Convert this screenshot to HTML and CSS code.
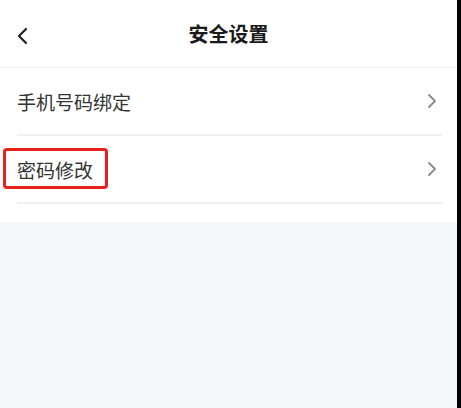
FILE: index.html
```html
<!DOCTYPE html>
<html lang="zh-CN">
<head>
  <meta charset="UTF-8" />
  <meta name="viewport" content="width=device-width, initial-scale=1.0"/>
  <title>安全设置</title>
  <link rel="stylesheet" href="styles.css">
</head>
<body>
  <div class="page">
    <div class="header">
      <span class="back">
        <svg width="12" height="18" viewBox="0 0 12 18"><path d="M10 2 L3 9 L10 16" fill="none" stroke="#222" stroke-width="2.2" stroke-linecap="round" stroke-linejoin="round"/></svg>
      </span>
      <h1>安全设置</h1>
    </div>

    <div class="list">
      <div class="row">
        <span class="label">手机号码绑定</span>
        <svg class="arrow" width="10" height="16" viewBox="0 0 10 16"><path d="M2 2 L8 8 L2 14" fill="none" stroke="#8a8a8a" stroke-width="1.8" stroke-linecap="round" stroke-linejoin="round"/></svg>
      </div>
      <div class="row">
        <span class="label">密码修改</span>
        <span class="mark"></span>
        <svg class="arrow" width="10" height="16" viewBox="0 0 10 16"><path d="M2 2 L8 8 L2 14" fill="none" stroke="#8a8a8a" stroke-width="1.8" stroke-linecap="round" stroke-linejoin="round"/></svg>
      </div>
    </div>
  </div>
</body>
</html>
```

FILE: styles.css
```css
body {
  margin: 0;
  padding: 0;
  background: #000;
  font-family: "Noto Sans CJK SC", "Noto Sans", sans-serif;
}

.page {
  width: 457px;
  min-height: 100vh;
  background: #f5f6f7;
}

.header {
  height: 67px;
  background: #fff;
  border-bottom: 1px solid #f0f0f0;
  display: flex;
  align-items: center;
  justify-content: center;
  position: relative;
}

.back {
  position: absolute;
  left: 16px;
  top: 26px;
}

h1 {
  margin: 0;
  font-size: 20px;
  font-weight: bold;
  color: #1a1a1a;
}

.list {
  background: #fff;
  padding-bottom: 18px;
}

.row {
  height: 66px;
  margin: 0 15px 0 17px;
  border-bottom: 2px solid #f0f0f0;
  display: flex;
  align-items: center;
  justify-content: space-between;
  padding-right: 5px;
  position: relative;
}

.label {
  font-size: 19px;
  color: #333;
}

.mark {
  position: absolute;
  left: -14px;
  top: 12px;
  width: 99px;
  height: 35px;
  border: 3px solid #e8211c;
  border-radius: 4px;
}
```
